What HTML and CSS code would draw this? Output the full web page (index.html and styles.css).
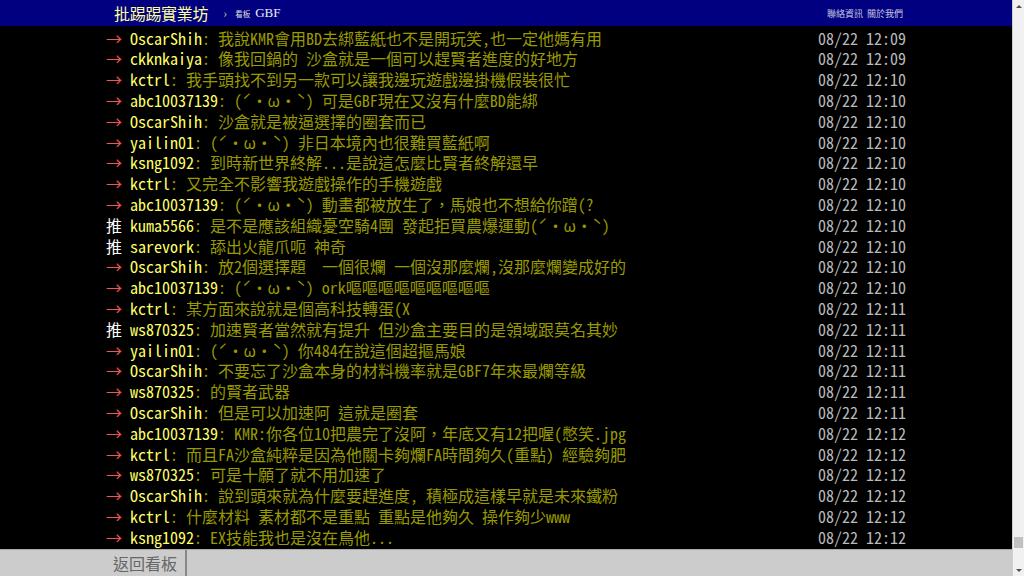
FILE: index.html
```html
<!DOCTYPE html>
<html lang="zh-Hant">
<head>
<meta charset="utf-8">
<title>GBF - 批踢踢實業坊</title>
<link rel="stylesheet" href="styles.css">
</head>
<body>
<div class="window">
  <div class="page">
    <header class="topbar">
      <div class="bar-inner">
        <div class="crumbs">
          <span class="logo">批踢踢實業坊</span>
          <span class="sep">›</span>
          <span class="board-label">看板</span>
          <span class="board-name">GBF</span>
        </div>
        <div class="links">
          <span class="link">聯絡資訊</span>
          <span class="link">關於我們</span>
        </div>
      </div>
    </header>
    <main class="content">
      <div class="screen">
        <div class="push"><span class="tag arrow">→</span><span class="uid">OscarShih</span><span class="txt">: 我說KMR會用BD去綁藍紙也不是開玩笑,也一定他媽有用</span><span class="time">08/22 12:09</span></div>
        <div class="push"><span class="tag arrow">→</span><span class="uid">ckknkaiya</span><span class="txt">: 像我回鍋的 沙盒就是一個可以趕賢者進度的好地方</span><span class="time">08/22 12:09</span></div>
        <div class="push"><span class="tag arrow">→</span><span class="uid">kctrl</span><span class="txt">: 我手頭找不到另一款可以讓我邊玩遊戲邊掛機假裝很忙</span><span class="time">08/22 12:10</span></div>
        <div class="push"><span class="tag arrow">→</span><span class="uid">abc10037139</span><span class="txt">: (ˊ・ω・ˋ) 可是GBF現在又沒有什麼BD能綁</span><span class="time">08/22 12:10</span></div>
        <div class="push"><span class="tag arrow">→</span><span class="uid">OscarShih</span><span class="txt">: 沙盒就是被逼選擇的圈套而已</span><span class="time">08/22 12:10</span></div>
        <div class="push"><span class="tag arrow">→</span><span class="uid">yailin01</span><span class="txt">: (ˊ・ω・ˋ) 非日本境內也很難買藍紙啊</span><span class="time">08/22 12:10</span></div>
        <div class="push"><span class="tag arrow">→</span><span class="uid">ksng1092</span><span class="txt">: 到時新世界終解...是說這怎麼比賢者終解還早</span><span class="time">08/22 12:10</span></div>
        <div class="push"><span class="tag arrow">→</span><span class="uid">kctrl</span><span class="txt">: 又完全不影響我遊戲操作的手機遊戲</span><span class="time">08/22 12:10</span></div>
        <div class="push"><span class="tag arrow">→</span><span class="uid">abc10037139</span><span class="txt">: (ˊ・ω・ˋ) 動畫都被放生了，馬娘也不想給你蹭(?</span><span class="time">08/22 12:10</span></div>
        <div class="push"><span class="tag good">推</span><span class="uid">kuma5566</span><span class="txt">: 是不是應該組織憂空騎4團 發起拒買農爆運動(ˊ・ω・ˋ)</span><span class="time">08/22 12:10</span></div>
        <div class="push"><span class="tag good">推</span><span class="uid">sarevork</span><span class="txt">: 舔出火龍爪呃 神奇</span><span class="time">08/22 12:10</span></div>
        <div class="push"><span class="tag arrow">→</span><span class="uid">OscarShih</span><span class="txt">: 放2個選擇題  一個很爛 一個沒那麼爛,沒那麼爛變成好的</span><span class="time">08/22 12:10</span></div>
        <div class="push"><span class="tag arrow">→</span><span class="uid">abc10037139</span><span class="txt">: (ˊ・ω・ˋ) ork嘔嘔嘔嘔嘔嘔嘔嘔嘔</span><span class="time">08/22 12:10</span></div>
        <div class="push"><span class="tag arrow">→</span><span class="uid">kctrl</span><span class="txt">: 某方面來說就是個高科技轉蛋(X</span><span class="time">08/22 12:11</span></div>
        <div class="push"><span class="tag good">推</span><span class="uid">ws870325</span><span class="txt">: 加速賢者當然就有提升 但沙盒主要目的是領域跟莫名其妙</span><span class="time">08/22 12:11</span></div>
        <div class="push"><span class="tag arrow">→</span><span class="uid">yailin01</span><span class="txt">: (ˊ・ω・ˋ) 你484在說這個超摳馬娘</span><span class="time">08/22 12:11</span></div>
        <div class="push"><span class="tag arrow">→</span><span class="uid">OscarShih</span><span class="txt">: 不要忘了沙盒本身的材料機率就是GBF7年來最爛等級</span><span class="time">08/22 12:11</span></div>
        <div class="push"><span class="tag arrow">→</span><span class="uid">ws870325</span><span class="txt">: 的賢者武器</span><span class="time">08/22 12:11</span></div>
        <div class="push"><span class="tag arrow">→</span><span class="uid">OscarShih</span><span class="txt">: 但是可以加速阿 這就是圈套</span><span class="time">08/22 12:11</span></div>
        <div class="push"><span class="tag arrow">→</span><span class="uid">abc10037139</span><span class="txt">: KMR:你各位10把農完了沒阿，年底又有12把喔(憋笑.jpg</span><span class="time">08/22 12:12</span></div>
        <div class="push"><span class="tag arrow">→</span><span class="uid">kctrl</span><span class="txt">: 而且FA沙盒純粹是因為他關卡夠爛FA時間夠久(重點) 經驗夠肥</span><span class="time">08/22 12:12</span></div>
        <div class="push"><span class="tag arrow">→</span><span class="uid">ws870325</span><span class="txt">: 可是十願了就不用加速了</span><span class="time">08/22 12:12</span></div>
        <div class="push"><span class="tag arrow">→</span><span class="uid">OscarShih</span><span class="txt">: 說到頭來就為什麼要趕進度, 積極成這樣早就是未來鐵粉</span><span class="time">08/22 12:12</span></div>
        <div class="push"><span class="tag arrow">→</span><span class="uid">kctrl</span><span class="txt">: 什麼材料 素材都不是重點 重點是他夠久 操作夠少www</span><span class="time">08/22 12:12</span></div>
        <div class="push"><span class="tag arrow">→</span><span class="uid">ksng1092</span><span class="txt">: EX技能我也是沒在鳥他...</span><span class="time">08/22 12:12</span></div>
      </div>
    </main>
    <footer class="bottombar">
      <div class="bar-inner">
        <span class="back">返回看板</span>
      </div>
    </footer>
  </div>
  <div class="scrollbar">
    <div class="sb-btn"><span class="tri up"></span></div>
    <div class="sb-track"><div class="sb-thumb"></div></div>
    <div class="sb-btn"><span class="tri down"></span></div>
  </div>
</div>
</body>
</html>
```
FILE: styles.css
```css
html, body {
  margin: 0;
  padding: 0;
  height: 576px;
  overflow: hidden;
  background: #000;
}
body {
  font-family: "Liberation Serif", "Noto Sans CJK TC", serif;
}
.window {
  display: flex;
  height: 576px;
}
.page {
  flex: 1;
  display: flex;
  flex-direction: column;
  min-width: 0;
}
.bar-inner {
  width: 800px;
  margin: 0 auto;
  display: flex;
  align-items: center;
  height: 100%;
}
.topbar {
  height: 26px;
  background: #000080;
  flex: none;
}
.topbar .bar-inner {
  justify-content: space-between;
}
.crumbs {
  display: flex;
  align-items: center;
  padding-left: 8px;
}
.logo {
  font-family: "Noto Sans CJK TC", sans-serif;
  font-size: 16px;
  color: #ffff99;
  line-height: 26px;
  letter-spacing: -0.3px;
}
.sep {
  color: #bbb;
  font-size: 12px;
  margin: 0 8px 0 15px;
}
.board-label {
  font-family: "Noto Sans CJK TC", sans-serif;
  font-size: 7.5px;
  color: #ddd;
  margin-right: 5px;
}
.board-name {
  font-size: 13px;
  color: #eee;
}
.links {
  display: flex;
  gap: 4px;
  padding-right: 3px;
}
.link {
  font-family: "Noto Sans CJK TC", sans-serif;
  font-size: 9px;
  color: #c8c8e0;
}
.content {
  flex: 1;
  overflow: hidden;
  background: #000;
  padding-top: 1.6px;
}
.screen {
  width: 800px;
  margin: 0 auto;
  font-family: "Noto Sans Mono CJK TC", "Liberation Mono", monospace;
  font-size: 16px;
  line-height: 20.8px;
}
.push {
  white-space: nowrap;
  height: 20.8px;
}
.tag {
  display: inline-block;
  width: 24px;
  font-family: "Noto Sans CJK TC", sans-serif;
}
.arrow { color: #f05555; }
.good { color: #ffffff; }
.uid {
  color: #ffff66;
}
.txt {
  color: #999900;
  white-space: pre;
}
.time {
  float: right;
  color: #bbbbbb;
  white-space: pre;
}
.bottombar {
  height: 26px;
  flex: none;
  background: #cccccc;
  border-top: 1px solid #aaaaaa;
}
.back {
  font-family: "Noto Sans CJK TC", sans-serif;
  font-size: 16px;
  color: #666;
  padding: 0 8px 0 7px;
  height: 100%;
  display: flex;
  align-items: center;
  border-right: 2px solid #888;
}
.scrollbar {
  width: 11px;
  flex: none;
  background: #f1f1f1;
  border-left: 1px solid #cfcfcf;
  display: flex;
  flex-direction: column;
}
.sb-btn {
  height: 12px;
  display: flex;
  align-items: center;
  justify-content: center;
}
.tri {
  width: 0;
  height: 0;
  border-left: 3px solid transparent;
  border-right: 3px solid transparent;
}
.tri.up { border-bottom: 3px solid #505050; }
.tri.down { border-top: 3px solid #505050; }
.sb-track {
  flex: 1;
  display: flex;
  flex-direction: column;
  justify-content: flex-end;
  padding: 0 1px 16px 1px;
}
.sb-thumb {
  height: 11px;
  background: #c1c1c1;
}
```
